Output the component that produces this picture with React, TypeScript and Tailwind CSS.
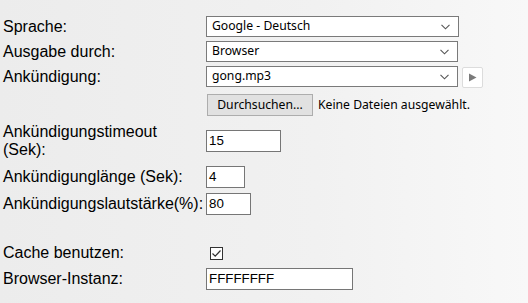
import React from "react";

const lab = "w-[203px] shrink-0 text-[16px] leading-[18px] text-black";
const ui = "font-['Noto_Sans',sans-serif] text-[12.2px]";

function Select({ value, w }: { value: string; w: string }) {
  return (
    <div className={`${w} h-[21px] border border-[#7a7a7a] bg-white flex items-center justify-between pl-[5px] pr-[8px] ${ui} text-black`}>
      <span className="leading-none">{value}</span>
      <svg width="9" height="6" viewBox="0 0 9 6">
        <path d="M0.5 0.8 L4.5 4.8 L8.5 0.8" fill="none" stroke="#555" strokeWidth="1.1" />
      </svg>
    </div>
  );
}

function Input({ value, w }: { value: string; w: string }) {
  return (
    <div className={`${w} h-[22px] border border-[#767676] bg-white flex items-center pl-[2px] font-['Liberation_Sans',Arial,sans-serif] text-[13.33px] text-black`}>
      {value}
    </div>
  );
}

export default function App() {
  return (
    <div className="h-[303px] w-[528px] bg-[linear-gradient(to_right,#ececec,#f1f1f1_60%,#f8f8f8)] font-['Liberation_Sans',Arial,sans-serif] pt-[16px] pl-[3px]">
      <div className="flex items-center h-[21px]">
        <div className={lab}>Sprache:</div>
        <Select value="Google - Deutsch" w="w-[253px]" />
      </div>
      <div className="flex items-center h-[21px] mt-[4px]">
        <div className={lab}>Ausgabe durch:</div>
        <Select value="Browser" w="w-[252px]" />
      </div>
      <div className="flex items-start h-[22px] mt-[4px]">
        <div className={`${lab} mt-[2px]`}>Ankündigung:</div>
        <Select value="gong.mp3" w="w-[252px]" />
        <div className="ml-[4px] mt-[1px] w-[21px] h-[21px] rounded-[2px] border border-[#dcdcdc] bg-white flex items-center justify-center">
          <svg width="9" height="9" viewBox="0 0 9 9">
            <path d="M1 0.5 L8.5 4.5 L1 8.5 Z" fill="#7a7a7a" />
          </svg>
        </div>
      </div>
      <div className="flex items-center h-[22px] mt-[6px]">
        <div className={lab}></div>
        <div className={`ml-[1px] w-[106px] h-[22px] border border-[#adadad] bg-[#e1e1e1] flex items-center justify-center ${ui} text-black`}>
          Durchsuchen...
        </div>
        <div className={`ml-[5px] ${ui} text-black`}>Keine Dateien ausgewählt.</div>
      </div>
      <div className="flex items-center h-[36px] mt-[7px]">
        <div className={lab}>
          Ankündigungstimeout
          <br />
          (Sek):
        </div>
        <Input value="15" w="w-[75px]" />
      </div>
      <div className="flex items-center h-[22px] mt-[7px]">
        <div className={lab}>Ankündigunglänge (Sek):</div>
        <Input value="4" w="w-[39px]" />
      </div>
      <div className="flex items-center h-[22px] mt-[5px]">
        <div className={lab}>Ankündigungslautstärke(%):</div>
        <Input value="80" w="w-[45px]" />
      </div>
      <div className="flex items-center h-[22px] mt-[27px]">
        <div className={lab}>Cache benutzen:</div>
        <div className="ml-[4px] w-[13px] h-[13px] border border-[#333] bg-white flex items-center justify-center">
          <svg width="11" height="11" viewBox="0 0 11 11">
            <path d="M1.5 5.5 L4.2 8.2 L9.5 2.5" fill="none" stroke="#333" strokeWidth="1.2" />
          </svg>
        </div>
      </div>
      <div className="flex items-center h-[22px] mt-[4px]">
        <div className={lab}>Browser-Instanz:</div>
        <Input value="FFFFFFFF" w="w-[147px]" />
      </div>
    </div>
  );
}
